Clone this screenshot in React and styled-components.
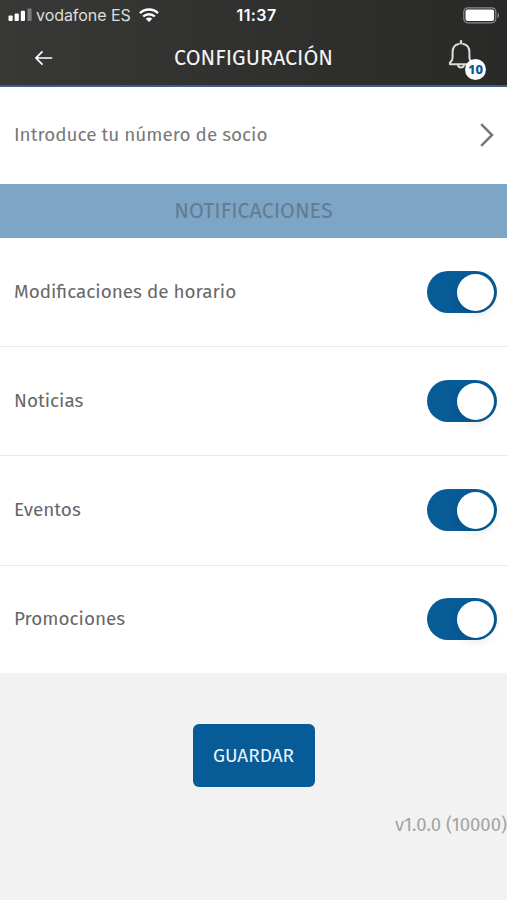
import React, { useState } from 'react';
import styled, { createGlobalStyle } from 'styled-components';

const rows = [
  { id: 'horario', label: 'Modificaciones de horario' },
  { id: 'noticias', label: 'Noticias' },
  { id: 'eventos', label: 'Eventos' },
  { id: 'promociones', label: 'Promociones' },
];

const SignalIcon = () => (
  <svg width="24" height="14" viewBox="0 0 24 14" fill="#fff">
    <rect x="0.5" y="7.5" width="4.2" height="5.5" rx="1" />
    <rect x="6.6" y="5.5" width="4.2" height="7.5" rx="1" />
    <rect x="12.8" y="2.8" width="4.2" height="10.2" rx="1" />
    <rect x="19.4" y="0.5" width="4.2" height="12.5" rx="1" opacity="0.35" />
  </svg>
);

const WifiIcon = () => (
  <svg width="20" height="15" viewBox="0 0 20 15" fill="none" stroke="#fff" strokeWidth="2.4">
    <path d="M1 5.2C6 0.3 14 0.3 19 5.2" />
    <path d="M4.2 8.5C7.5 5.4 12.5 5.4 15.8 8.5" />
    <path d="M10 14L6.7 10.8C8.6 9.2 11.4 9.2 13.3 10.8Z" fill="#fff" stroke="none" />
  </svg>
);

const BatteryIcon = () => (
  <svg width="37" height="17" viewBox="0 0 37 17">
    <rect x="0.8" y="0.8" width="32" height="15" rx="4" fill="none" stroke="#8b8b89" strokeWidth="1.2" />
    <rect x="2.5" y="2.5" width="28.6" height="11.6" rx="2" fill="#fff" />
    <path d="M34.6 5.5C36.6 6.4 36.6 10.2 34.6 11.1Z" fill="#8b8b89" />
  </svg>
);

const BackIcon = () => (
  <svg width="18" height="14" viewBox="0 0 18 14" fill="none" stroke="#fff" strokeWidth="1.7" strokeLinecap="round">
    <path d="M7 0.9L1 7L7 13.1M1 7H16.5" />
  </svg>
);

const BellIcon = () => (
  <svg width="26" height="30" viewBox="0 0 26 30" fill="none" stroke="#dcdcda" strokeWidth="2" strokeLinecap="round" strokeLinejoin="round">
    <path d="M10.8 3.9C7 4.6 4.6 7.6 4.6 12V17.5C4.6 20 3.4 21.3 1.9 22.8V24.2H24.1V22.8C22.6 21.3 21.4 20 21.4 17.5V12C21.4 7.6 19 4.6 15.2 3.9" />
    <path d="M13 1.3V3.3" strokeWidth="2.4" />
    <path d="M10 24.8A3 2.6 0 0 0 16 24.8" />
  </svg>
);

const ChevronIcon = () => (
  <svg width="14" height="24" viewBox="0 0 14 24" fill="none" stroke="#777" strokeWidth="2.5">
    <path d="M1.2 1.2L12 12L1.2 22.8" />
  </svg>
);

const App = () => {
  const [enabled, setEnabled] = useState({
    horario: true,
    noticias: true,
    eventos: true,
    promociones: true,
  });

  const toggle = (id) => {
    setEnabled({ ...enabled, [id]: !enabled[id] });
  };

  return (
    <Wrapper>
      <GlobalStyle />
      <Header>
        <StatusBar>
          <Carrier>
            <SignalIcon />
            <span>vodafone ES</span>
            <WifiIcon />
          </Carrier>
          <Clock>11:37</Clock>
          <Battery><BatteryIcon /></Battery>
        </StatusBar>
        <NavBar>
          <BackButton aria-label="Volver"><BackIcon /></BackButton>
          <Title>CONFIGURACIÓN</Title>
          <BellButton>
            <BellIcon />
            <Badge>10</Badge>
          </BellButton>
        </NavBar>
      </Header>

      <MemberRow>
        <Label $light>Introduce tu número de socio</Label>
        <ChevronIcon />
      </MemberRow>
      <SectionTitle>NOTIFICACIONES</SectionTitle>

      {rows.map((row) => (
        <Row key={row.id}>
          <Label>{row.label}</Label>
          <Switch role="switch" aria-checked={enabled[row.id]} $on={enabled[row.id]} onClick={() => toggle(row.id)}>
            <Knob />
          </Switch>
        </Row>
      ))}

      <Footer>
        <SaveButton>GUARDAR</SaveButton>
        <Version>v1.0.0 (10000)</Version>
      </Footer>
    </Wrapper>
  );
};

const GlobalStyle = createGlobalStyle`
  * {
    box-sizing: border-box;
  }
  body {
    margin: 0;
    background-color: #f2f2f2;
  }
  button {
    border: none;
    padding: 0;
    background: none;
    font-family: inherit;
    cursor: pointer;
  }
  svg {
    display: block;
    flex-shrink: 0;
  }
`;

const Wrapper = styled.div`
  display: flex;
  flex-direction: column;
  min-height: 900px;
  background-color: #f2f2f2;
  font-family: "Fira Sans", "Noto Sans", sans-serif;
  color: #6c6c6c;
  overflow: hidden;
`;

const Header = styled.header`
  height: 87px;
  background: linear-gradient(90deg, #383836, #292927);
  border-bottom: 2px solid #37618a;
  color: #fff;
`;

const StatusBar = styled.div`
  display: grid;
  grid-template-columns: 1fr auto 1fr;
  align-items: center;
  height: 30px;
  padding: 0 7px 0 8px;
  font-family: Inter, sans-serif;
`;

const Carrier = styled.div`
  display: flex;
  align-items: center;
  gap: 4px;
  font-size: 16px;
  color: #dededc;

  span {
    width: 95px;
    margin-right: 4px;
    letter-spacing: -0.05px;
    white-space: nowrap;
  }
`;

const Clock = styled.div`
  padding-left: 5px;
  font-size: 16px;
  font-weight: 600;
  letter-spacing: 0.4px;
`;

const Battery = styled.div`
  justify-self: end;
`;

const NavBar = styled.div`
  display: grid;
  grid-template-columns: 80px 1fr 80px;
  align-items: center;
  height: 55px;
`;

const BackButton = styled.button`
  margin-left: 35px;
  justify-self: start;
`;

const Title = styled.h1`
  margin: 0;
  padding-top: 1px;
  text-align: center;
  color: #f4f4f4;
  font-size: 21.5px;
  font-weight: 400;
  line-height: 28px;
`;

const BellButton = styled.button`
  position: relative;
  justify-self: start;
  margin: -6px 0 0 21px;
`;

const Badge = styled.span`
  position: absolute;
  left: 17px;
  top: 19px;
  display: flex;
  align-items: center;
  justify-content: center;
  width: 21px;
  height: 21px;
  border-radius: 50%;
  background-color: #fff;
  color: #075b96;
  font-family: "Noto Sans", sans-serif;
  font-size: 13px;
  font-weight: 800;
`;

const MemberRow = styled.div`
  display: flex;
  align-items: center;
  justify-content: space-between;
  height: 97px;
  padding: 0 13px 1px 14px;
  background-color: #fff;
`;

const SectionTitle = styled.h2`
  margin: 0;
  height: 54px;
  background-color: #7da5c6;
  color: #647c90;
  text-align: center;
  font-size: 21.5px;
  font-weight: 400;
  line-height: 55px;
`;

const Row = styled.div`
  display: flex;
  align-items: center;
  justify-content: space-between;
  height: 109.2px;
  padding: 0 10px 0 14px;
  background-color: #fff;
  border-bottom: 1px solid #e9e9e9;

  &:nth-last-child(2) {
    height: 108.4px;
    border-bottom-color: #f2f2f2;
  }
`;

const Label = styled.span`
  font-size: 18.9px;
  line-height: 26px;
  color: ${({ $light }) => ($light ? '#797979' : '#686868')};
`;

const Switch = styled.button`
  display: flex;
  align-items: center;
  justify-content: ${({ $on }) => ($on ? 'flex-end' : 'flex-start')};
  width: 70px;
  height: 42px;
  padding: 0 3px;
  border-radius: 21px;
  background-color: ${({ $on }) => ($on ? '#075b96' : '#ccc')};
`;

const Knob = styled.span`
  width: 37px;
  height: 37px;
  border-radius: 50%;
  background-color: #fff;
  box-shadow: 0 4px 8px rgba(0, 0, 0, 0.1);
`;

const Footer = styled.footer`
  display: flex;
  flex-direction: column;
  align-items: center;
  padding-top: 50px;
`;

const SaveButton = styled.button`
  width: 122px;
  height: 63px;
  border-radius: 6px;
  background-color: #075b96;
  color: #e8f4fb;
  font-size: 19px;
`;

const Version = styled.div`
  align-self: flex-end;
  margin-top: 25px;
  font-size: 18.5px;
  line-height: 26px;
  color: #a3a3a3;
`;

export default App;
